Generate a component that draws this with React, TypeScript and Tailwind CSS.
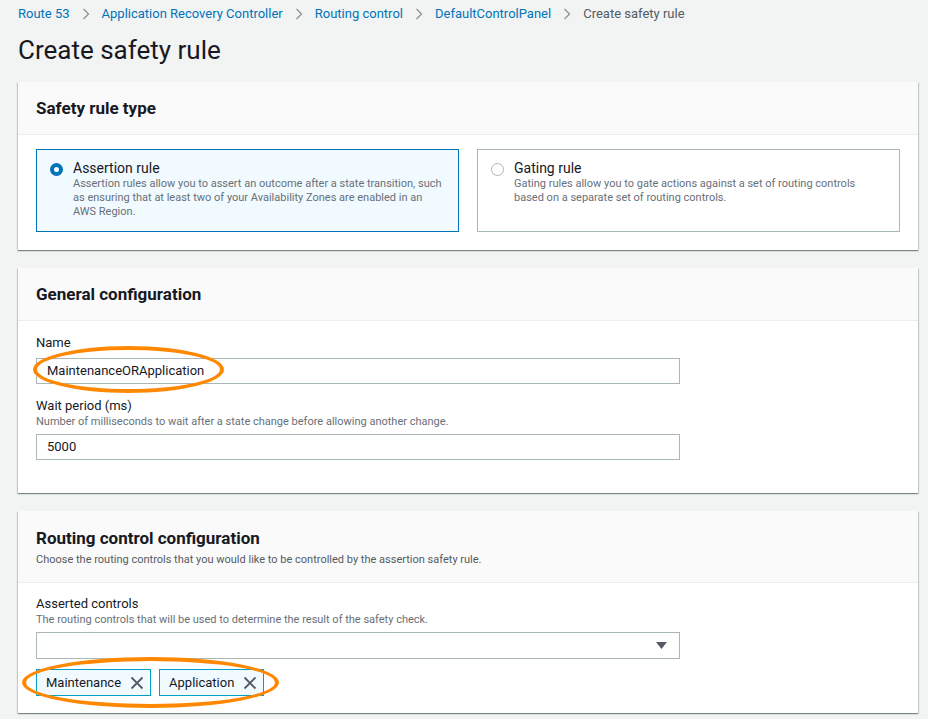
import React from "react";

const font = { fontFamily: 'Roboto, "Liberation Sans", sans-serif' };

function Chevron() {
  return (
    <svg width="8" height="12" viewBox="0 0 8 12" className="mx-[12px]">
      <path d="M1.5 1 L6.5 6 L1.5 11" fill="none" stroke="#879596" strokeWidth="1.3" />
    </svg>
  );
}

function Panel({ title, desc, children, bodyClass }: { title: string; desc?: string; children: React.ReactNode; bodyClass: string }) {
  return (
    <div className="bg-white shadow-[0_1px_1px_0_rgba(0,28,36,0.3),1px_1px_1px_0_rgba(0,28,36,0.15),-1px_1px_1px_0_rgba(0,28,36,0.15)]">
      <div className={`bg-[#fafafa] border-b border-[#eaeded] px-[18px] ${desc ? "h-[72px] pt-[16px]" : "h-[53px] flex items-center"}`}>
        <div className="text-[17px] font-bold text-[#16191f] leading-[22px]">{title}</div>
        {desc && <div className="text-[11px] text-[#545b64] leading-[14px] mt-[4px]">{desc}</div>}
      </div>
      <div className={bodyClass}>{children}</div>
    </div>
  );
}

function Ellipse({ className }: { className: string }) {
  return <div className={`absolute rounded-[50%] border-[#ff8800] pointer-events-none ${className}`} />;
}

export default function App() {
  return (
    <div className="min-h-screen bg-[#f2f3f3] px-[18px] text-[#16191f]" style={font}>
      <div className="h-[26px] flex items-center text-[13px] pt-[1px]">
        <span className="text-[#0073bb]">Route 53</span>
        <Chevron />
        <span className="text-[#0073bb]">Application Recovery Controller</span>
        <Chevron />
        <span className="text-[#0073bb]">Routing control</span>
        <Chevron />
        <span className="text-[#0073bb]">DefaultControlPanel</span>
        <Chevron />
        <span className="text-[#545b64]">Create safety rule</span>
      </div>
      <div className="h-[46px] flex items-center text-[26px] leading-[30px] text-[#16191f] pt-[2px]">Create safety rule</div>
      <div className="w-[900px] pt-[10px] flex flex-col gap-[18px]">
        <Panel title="Safety rule type" bodyClass="px-[18px] pt-[14px] pb-[18px] grid grid-cols-2 gap-[18px]">
          <div className="h-[83px] border border-[#0073bb] bg-[#f1faff] pl-[13px] pr-[12px] pt-[9px] flex gap-[10px]">
            <div className="mt-[4px] w-[13px] h-[13px] rounded-full border-[4px] border-[#0073bb] bg-white shrink-0" />
            <div>
              <div className="text-[14px] leading-[18px]">Assertion rule</div>
              <div className="text-[11px] leading-[14px] text-[#687078]">
                Assertion rules allow you to assert an outcome after a state transition, such as ensuring that at least two of your Availability Zones are enabled in an AWS Region.
              </div>
            </div>
          </div>
          <div className="h-[83px] border border-[#aab7b8] bg-white pl-[13px] pr-[12px] pt-[9px] flex gap-[10px]">
            <div className="mt-[4px] w-[13px] h-[13px] rounded-full border border-[#aab7b8] bg-white shrink-0" />
            <div>
              <div className="text-[14px] leading-[18px]">Gating rule</div>
              <div className="text-[11px] leading-[14px] text-[#687078]">
                Gating rules allow you to gate actions against a set of routing controls based on a separate set of routing controls.
              </div>
            </div>
          </div>
        </Panel>

        <Panel title="General configuration" bodyClass="px-[18px] pt-[14px] pb-[33px]">
          <div className="text-[13px] leading-[16px]">Name</div>
          <div className="relative mt-[7px] w-[644px]">
            <div className="h-[26px] border border-[#aab7b8] bg-white flex items-center pl-[10px] text-[13px]">MaintenanceORApplication</div>
            <Ellipse className="left-[-3px] top-[-12px] w-[191px] h-[47px] border-[4px]" />
          </div>
          <div className="text-[13px] leading-[16px] mt-[14px]">Wait period (ms)</div>
          <div className="text-[11px] leading-[14px] text-[#687078] mt-[1px]">Number of milliseconds to wait after a state change before allowing another change.</div>
          <div className="mt-[5px] w-[644px] h-[26px] border border-[#aab7b8] bg-white flex items-center pl-[10px] text-[13px]">5000</div>
        </Panel>

        <Panel title="Routing control configuration" desc="Choose the routing controls that you would like to be controlled by the assertion safety rule." bodyClass="px-[18px] pt-[13px] pb-[17px]">
          <div className="text-[13px] leading-[16px]">Asserted controls</div>
          <div className="text-[11px] leading-[14px] text-[#687078] mt-[1px]">The routing controls that will be used to determine the result of the safety check.</div>
          <div className="mt-[5px] w-[644px] h-[27px] border border-[#aab7b8] bg-white flex items-center justify-end pr-[12px]">
            <svg width="11" height="8" viewBox="0 0 11 8"><path d="M0 0 H11 L5.5 7 Z" fill="#545b64" /></svg>
          </div>
          <div className="relative mt-[10px] flex gap-[8px] w-fit">
            {["Maintenance", "Application"].map((t) => (
              <div key={t} className="h-[27px] border border-[#00a1c9] bg-[#f1faff] flex items-center pl-[9px] pr-[6px] gap-[9px] text-[13px]">
                <span>{t}</span>
                <svg width="14" height="14" viewBox="0 0 14 14"><path d="M1.5 1.5 L12.5 12.5 M12.5 1.5 L1.5 12.5" stroke="#545b64" strokeWidth="1.8" fill="none" /></svg>
              </div>
            ))}
            <Ellipse className="left-[-14px] top-[-12px] w-[257px] h-[51px] border-[4px]" />
          </div>
        </Panel>
      </div>
    </div>
  );
}
